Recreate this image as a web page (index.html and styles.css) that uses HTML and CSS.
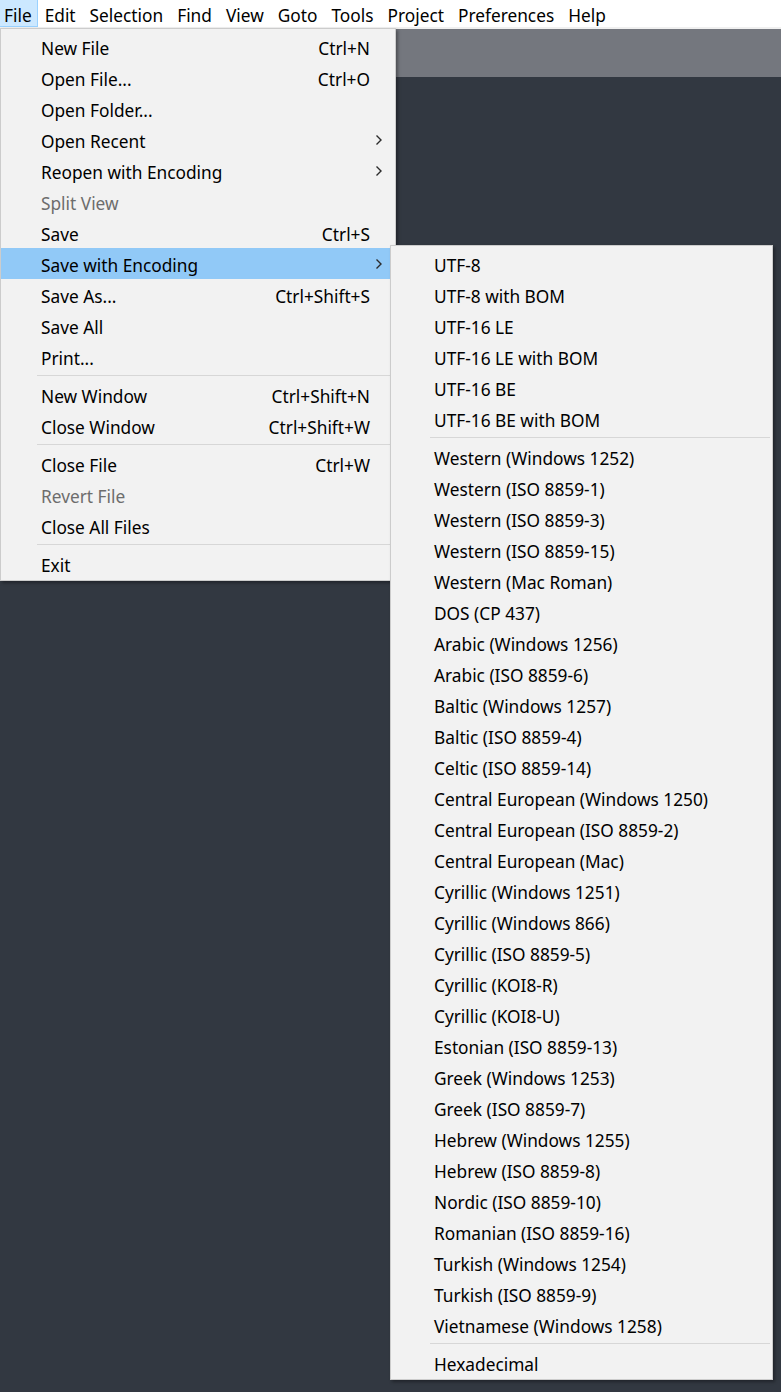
FILE: index.html
```html
<!DOCTYPE html>
<html>
<head>
<meta charset="utf-8">
<link rel="stylesheet" href="styles.css">
</head>
<body>
<div class="menubar">
  <span class="mb-item active">File</span>
  <span class="mb-item">Edit</span>
  <span class="mb-item">Selection</span>
  <span class="mb-item">Find</span>
  <span class="mb-item">View</span>
  <span class="mb-item">Goto</span>
  <span class="mb-item">Tools</span>
  <span class="mb-item">Project</span>
  <span class="mb-item">Preferences</span>
  <span class="mb-item">Help</span>
</div>
<div class="tabbar"></div>
<div class="editor"></div>

<div class="menu file-menu">
  <div class="row"><span class="label">New File</span><span class="key">Ctrl+N</span><span class="arrow"></span></div>
  <div class="row"><span class="label">Open File...</span><span class="key">Ctrl+O</span><span class="arrow"></span></div>
  <div class="row"><span class="label">Open Folder...</span><span class="key"></span><span class="arrow"></span></div>
  <div class="row"><span class="label">Open Recent</span><span class="key"></span><span class="arrow"><svg width="8" height="12" viewBox="0 0 8 12"><path d="M1.5 1.5 L6 6 L1.5 10.5" fill="none" stroke="#2b2b2b" stroke-width="1.4"/></svg></span></div>
  <div class="row"><span class="label">Reopen with Encoding</span><span class="key"></span><span class="arrow"><svg width="8" height="12" viewBox="0 0 8 12"><path d="M1.5 1.5 L6 6 L1.5 10.5" fill="none" stroke="#2b2b2b" stroke-width="1.4"/></svg></span></div>
  <div class="row disabled"><span class="label">Split View</span><span class="key"></span><span class="arrow"></span></div>
  <div class="row"><span class="label">Save</span><span class="key">Ctrl+S</span><span class="arrow"></span></div>
  <div class="row hl"><span class="label">Save with Encoding</span><span class="key"></span><span class="arrow"><svg width="8" height="12" viewBox="0 0 8 12"><path d="M1.5 1.5 L6 6 L1.5 10.5" fill="none" stroke="#2b2b2b" stroke-width="1.4"/></svg></span></div>
  <div class="row"><span class="label">Save As...</span><span class="key">Ctrl+Shift+S</span><span class="arrow"></span></div>
  <div class="row"><span class="label">Save All</span><span class="key"></span><span class="arrow"></span></div>
  <div class="row"><span class="label">Print...</span><span class="key"></span><span class="arrow"></span></div>
  <div class="sep"></div>
  <div class="row"><span class="label">New Window</span><span class="key">Ctrl+Shift+N</span><span class="arrow"></span></div>
  <div class="row"><span class="label">Close Window</span><span class="key">Ctrl+Shift+W</span><span class="arrow"></span></div>
  <div class="sep"></div>
  <div class="row"><span class="label">Close File</span><span class="key">Ctrl+W</span><span class="arrow"></span></div>
  <div class="row disabled"><span class="label">Revert File</span><span class="key"></span><span class="arrow"></span></div>
  <div class="row"><span class="label">Close All Files</span><span class="key"></span><span class="arrow"></span></div>
  <div class="sep"></div>
  <div class="row"><span class="label">Exit</span><span class="key"></span><span class="arrow"></span></div>
</div>

<div class="menu sub-menu">
  <div class="row"><span class="label">UTF-8</span></div>
  <div class="row"><span class="label">UTF-8 with BOM</span></div>
  <div class="row"><span class="label">UTF-16 LE</span></div>
  <div class="row"><span class="label">UTF-16 LE with BOM</span></div>
  <div class="row"><span class="label">UTF-16 BE</span></div>
  <div class="row"><span class="label">UTF-16 BE with BOM</span></div>
  <div class="sep"></div>
  <div class="row"><span class="label">Western (Windows 1252)</span></div>
  <div class="row"><span class="label">Western (ISO 8859-1)</span></div>
  <div class="row"><span class="label">Western (ISO 8859-3)</span></div>
  <div class="row"><span class="label">Western (ISO 8859-15)</span></div>
  <div class="row"><span class="label">Western (Mac Roman)</span></div>
  <div class="row"><span class="label">DOS (CP 437)</span></div>
  <div class="row"><span class="label">Arabic (Windows 1256)</span></div>
  <div class="row"><span class="label">Arabic (ISO 8859-6)</span></div>
  <div class="row"><span class="label">Baltic (Windows 1257)</span></div>
  <div class="row"><span class="label">Baltic (ISO 8859-4)</span></div>
  <div class="row"><span class="label">Celtic (ISO 8859-14)</span></div>
  <div class="row"><span class="label">Central European (Windows 1250)</span></div>
  <div class="row"><span class="label">Central European (ISO 8859-2)</span></div>
  <div class="row"><span class="label">Central European (Mac)</span></div>
  <div class="row"><span class="label">Cyrillic (Windows 1251)</span></div>
  <div class="row"><span class="label">Cyrillic (Windows 866)</span></div>
  <div class="row"><span class="label">Cyrillic (ISO 8859-5)</span></div>
  <div class="row"><span class="label">Cyrillic (KOI8-R)</span></div>
  <div class="row"><span class="label">Cyrillic (KOI8-U)</span></div>
  <div class="row"><span class="label">Estonian (ISO 8859-13)</span></div>
  <div class="row"><span class="label">Greek (Windows 1253)</span></div>
  <div class="row"><span class="label">Greek (ISO 8859-7)</span></div>
  <div class="row"><span class="label">Hebrew (Windows 1255)</span></div>
  <div class="row"><span class="label">Hebrew (ISO 8859-8)</span></div>
  <div class="row"><span class="label">Nordic (ISO 8859-10)</span></div>
  <div class="row"><span class="label">Romanian (ISO 8859-16)</span></div>
  <div class="row"><span class="label">Turkish (Windows 1254)</span></div>
  <div class="row"><span class="label">Turkish (ISO 8859-9)</span></div>
  <div class="row"><span class="label">Vietnamese (Windows 1258)</span></div>
  <div class="sep"></div>
  <div class="row"><span class="label">Hexadecimal</span></div>
</div>
</body>
</html>
```

FILE: styles.css
```css
html, body {
  margin: 0;
  padding: 0;
}
body {
  width: 781px;
  height: 1392px;
  background: #323841;
  font-family: "Noto Sans", "Open Sans", sans-serif;
  font-size: 17.3px;
  color: #000;
  overflow: hidden;
  position: relative;
}
.menubar {
  height: 27px;
  background: #ffffff;
  border-bottom: 2px solid #f0f0f0;
  display: flex;
  align-items: stretch;
}
.mb-item {
  height: 27px;
  line-height: 31px;
  padding: 0 7px;
  box-sizing: border-box;
  white-space: nowrap;
}
.mb-item.active {
  background: #cce8ff;
  border: 1px solid #99d1ff;
  border-top: none;
  border-left: none;
  line-height: 31px;
  padding: 0 5px 0 4px;
}
.tabbar {
  height: 48px;
  background: #74777e;
}
.editor {
  height: 1315px;
  background: #323841;
}
.menu {
  position: absolute;
  background: #f2f2f2;
  border: 1px solid #cccccc;
  box-shadow: 2px 2px 3px rgba(0, 0, 0, 0.35);
  box-sizing: border-box;
}
.file-menu {
  left: 0;
  top: 28px;
  width: 396px;
  padding: 2px 0 1px 0;
}
.sub-menu {
  left: 390px;
  top: 245px;
  width: 383px;
  padding: 2px 0 1px 0;
}
.row {
  height: 31px;
  display: flex;
  align-items: center;
  padding-left: 40px;
  white-space: nowrap;
  line-height: 31px;
}
.row .label {
  flex: 1;
  position: relative;
  top: 2px;
}
.row .key {
  text-align: right;
  position: relative;
  top: 2px;
}
.row .arrow {
  width: 25px;
  box-sizing: border-box;
  display: flex;
  align-items: center;
  justify-content: center;
  padding-right: 7px;
}
.sub-menu .row {
  padding-left: 43px;
}
.row.hl {
  background: #91c9f7;
}
.row.disabled {
  color: #6d6d6d;
}
.sep {
  height: 1px;
  background: #d7d7d7;
  margin: 3px 2px 3px 36px;
}
.sub-menu .sep {
  margin-left: 39px;
}
```
